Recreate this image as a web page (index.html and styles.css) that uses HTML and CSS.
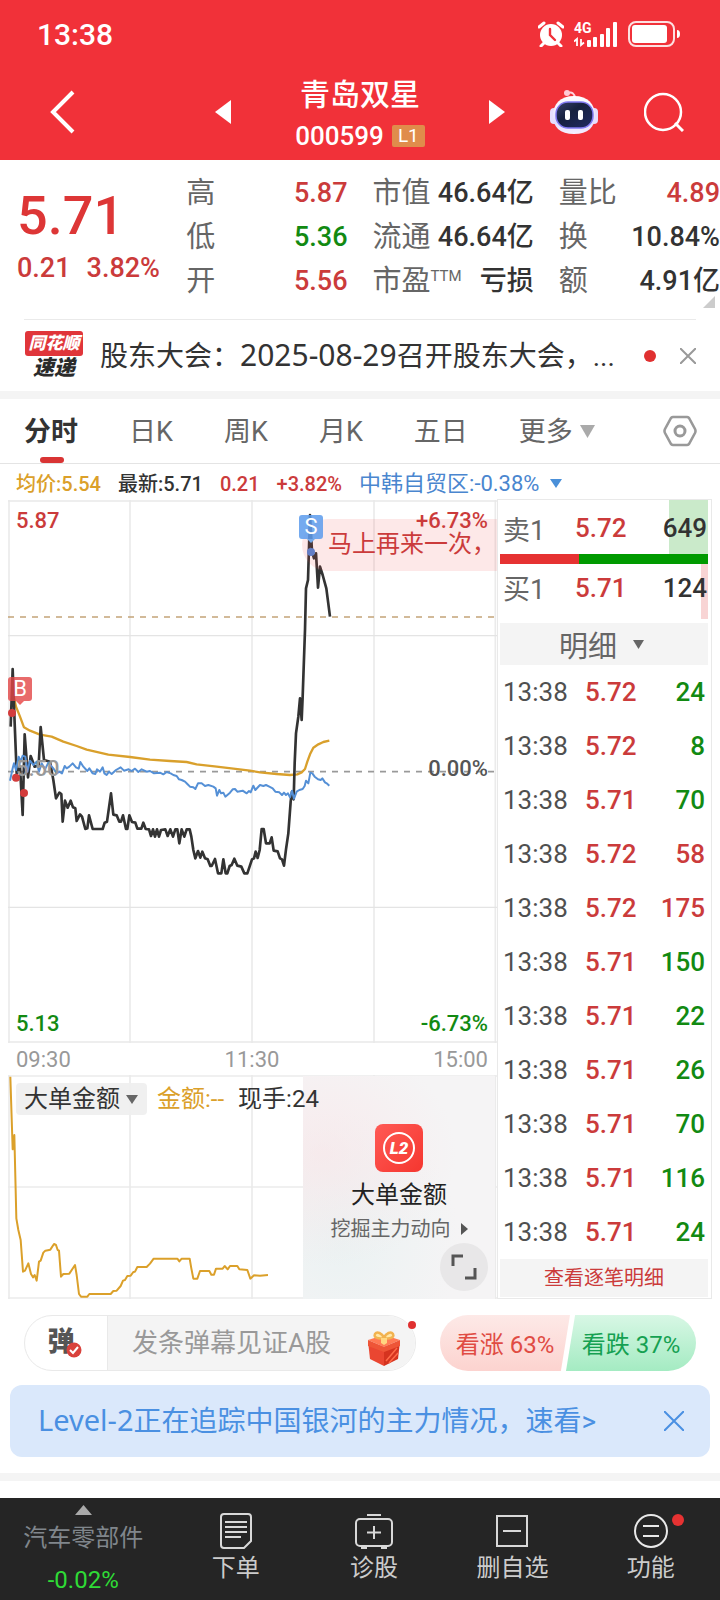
FILE: index.html
```html
<!DOCTYPE html>
<html lang="zh-CN">
<head>
<meta charset="utf-8">
<meta name="viewport" content="width=device-width, initial-scale=1">
<title>青岛双星 000599</title>
<link rel="stylesheet" href="styles.css">
</head>
<body>
<div class="app">
  <header class="top">
    <div class="status">
      <span class="clock">13:38</span>
      <div class="status-icons">
        <svg width="26" height="26" viewBox="0 0 26 26">
          <circle cx="13" cy="14" r="11" fill="#fff"/>
          <path d="M1 6 6 2M25 6 20 2M6 22 3 25M20 22 23 25" stroke="#fff" stroke-width="3" stroke-linecap="round"/>
          <path d="M12 8V14L17 19" fill="none" stroke="#f13139" stroke-width="2.4" stroke-linecap="round"/>
        </svg>
        <div class="signal">
          <span class="net">4G</span>
          <svg width="44" height="25" viewBox="0 0 44 25">
            <g fill="#fff">
              <rect x="13" y="18" width="4" height="7" rx="1"/><rect x="19" y="15" width="4" height="10" rx="1"/>
              <rect x="26" y="12" width="4" height="13" rx="1"/><rect x="32" y="6" width="4" height="19" rx="1"/>
              <rect x="39" y="0" width="4" height="25" rx="1"/>
            </g>
            <path d="M0 19.500 3 17V24M7 17V23L10 20.500" fill="none" stroke="#fff" stroke-width="1.800"/>
          </svg>
        </div>
        <svg width="54" height="26" viewBox="0 0 54 26">
          <rect x="1" y="1" width="45" height="24" rx="7" fill="none" stroke="#fff" stroke-width="2" opacity=".85"/>
          <rect x="4" y="4" width="35" height="18" rx="3" fill="#fff"/>
          <path d="M49 9Q52 9 52 13T49 17Z" fill="#fff"/>
        </svg>
      </div>
    </div>
    <div class="titlebar">
      <button class="icon-btn back" aria-label="返回">
        <svg width="26" height="44" viewBox="0 0 26 44"><path d="M23 2 3 22 23 42" fill="none" stroke="#fff" stroke-width="4"/></svg>
      </button>
      <div class="stock-nav">
        <button class="icon-btn" aria-label="上一只"><svg width="16" height="24" viewBox="0 0 16 24"><path d="M16 0V24L0 12Z" fill="#fff"/></svg></button>
        <div class="stock">
          <h1 class="stock-name">青岛双星</h1>
          <div class="stock-code">000599<span class="level">L1</span></div>
        </div>
        <button class="icon-btn" aria-label="下一只"><svg width="16" height="24" viewBox="0 0 16 24"><path d="M0 0V24L16 12Z" fill="#fff"/></svg></button>
      </div>
      <div class="title-actions">
        <button class="icon-btn" aria-label="智能助手">
          <svg width="48" height="46" viewBox="0 0 48 46">
            <defs>
              <linearGradient id="shell" x1="0" y1="0" x2="0" y2="1"><stop offset="0" stop-color="#fff"/><stop offset=".7" stop-color="#e3dcff"/><stop offset="1" stop-color="#f6f0ff"/></linearGradient>
              <linearGradient id="visor" x1="0" y1="0" x2="1" y2="1"><stop offset="0" stop-color="#36406b"/><stop offset=".4" stop-color="#17213f"/><stop offset="1" stop-color="#202a63"/></linearGradient>
            </defs>
            <path d="M18 4Q24 2 25 9" fill="none" stroke="#ffd3de" stroke-width="2"/>
            <circle cx="17" cy="4" r="3" fill="#ffc9d5"/>
            <rect x="0" y="19" width="9" height="16" rx="4" fill="#e6defd"/><rect x="39" y="19" width="9" height="16" rx="4" fill="#e6defd"/>
            <path d="M24 7C38 7 45 15 45 27 45 38 38 45 24 45S3 38 3 27C3 15 10 7 24 7Z" fill="url(#shell)"/>
            <rect x="6" y="13" width="37" height="26" rx="12" fill="url(#visor)" stroke="#8079f2" stroke-width="1.500"/>
            <rect x="15" y="21" width="5" height="10" rx="2" fill="#fff"/><rect x="28" y="21" width="5" height="10" rx="2" fill="#fff"/>
          </svg>
        </button>
        <button class="icon-btn" aria-label="搜索">
          <svg width="40" height="40" viewBox="0 0 40 40"><circle cx="19" cy="20" r="18" fill="none" stroke="#fff" stroke-width="2.500"/><path d="M31 31 39 39" stroke="#fff" stroke-width="3"/></svg>
        </button>
      </div>
    </div>
  </header>

  <section class="quote">
    <div class="price">
      <div class="price-now">5.71</div>
      <div class="price-change"><span>0.21</span><span>3.82%</span></div>
    </div>
    <dl class="metrics">
      <div class="metric"><dt>高</dt><dd class="up">5.87</dd></div>
      <div class="metric"><dt>低</dt><dd class="down">5.36</dd></div>
      <div class="metric"><dt>开</dt><dd class="up">5.56</dd></div>
    </dl>
    <dl class="metrics">
      <div class="metric"><dt>市值</dt><dd>46.64亿</dd></div>
      <div class="metric"><dt>流通</dt><dd>46.64亿</dd></div>
      <div class="metric"><dt>市盈<sup class="ttm">TTM</sup></dt><dd>亏损</dd></div>
    </dl>
    <dl class="metrics">
      <div class="metric"><dt>量比</dt><dd class="up">4.89</dd></div>
      <div class="metric"><dt>换</dt><dd>10.84%</dd></div>
      <div class="metric"><dt>额</dt><dd>4.91亿</dd></div>
    </dl>
    <svg class="corner" width="12" height="12" viewBox="0 0 12 12"><path d="M12 0V12H0Z" fill="#ccc"/></svg>
  </section>

  <section class="news">
    <div class="news-logo"><span class="logo-top">同花顺</span><span class="logo-bottom">速递</span></div>
    <a class="news-text" href="#">股东大会：<span class="date">2025-08-29</span>召开股东大会，...</a>
    <span class="news-dot"></span>
    <button class="icon-btn" aria-label="关闭"><svg width="16" height="16" viewBox="0 0 16 16"><path d="M0 0 16 16M16 0 0 16" stroke="#999" stroke-width="2"/></svg></button>
  </section>

  <nav class="tabs">
    <button class="tab active">分时</button>
    <button class="tab">日K</button>
    <button class="tab">周K</button>
    <button class="tab">月K</button>
    <button class="tab">五日</button>
    <button class="tab more">更多<svg width="15" height="13" viewBox="0 0 15 13"><path d="M0 0H15L7.500 13Z" fill="#aaa"/></svg></button>
    <button class="icon-btn settings" aria-label="设置">
      <svg width="34" height="32" viewBox="0 0 34 32"><path d="M10 2H24Q25 2 26 3L32 14Q33 16 32 18L26 29Q25 30 24 30H10Q9 30 8 29L2 18Q1 16 2 14L8 3Q9 2 10 2Z" fill="none" stroke="#999" stroke-width="2.600"/><circle cx="17" cy="16" r="5" fill="none" stroke="#999" stroke-width="3"/></svg>
    </button>
  </nav>

  <div class="legend">
    <span class="gold">均价:5.54</span><span>最新:5.71</span><span class="up">0.21</span><span class="up">+3.82%</span>
    <button class="compare">中韩自贸区:-0.38%<svg width="12" height="9" viewBox="0 0 12 9"><path d="M0 0H12L6 9Z" fill="#4a90d9"/></svg></button>
  </div>

  <main class="board">
    <div class="charts">
      <div class="minute">
        <svg class="plot" viewBox="24 30 1467 1629" preserveAspectRatio="none">
          <path d="M27 30V1659M390 30V1659M756 30V1659M1122 30V1659M1486 30V1659" stroke="#ebebeb" stroke-width="5"/>
          <path d="M24 33H1491M24 1656H1491" stroke="#e9e9e9" stroke-width="5"/>
          <path d="M24 437H1491M24 1252H1491" stroke="#e4e4e4" stroke-width="4"/>
          <path d="M24 845H1491" stroke="#999" stroke-width="5" stroke-dasharray="18 18"/>
          <path d="M24 381H1491" stroke="#c4a478" stroke-width="5" stroke-dasharray="18 18"/>
          <polyline fill="none" stroke="#d9a02c" stroke-width="7" stroke-linejoin="round" points="40,615 48,650 60,680 72,712 90,722 120,734 155,740 190,755 230,768 260,779 325,794 390,801 450,809 510,813 560,816 590,823 650,830 700,836 750,842 780,847 830,852 870,855 892,853 905,847 915,837 922,815 930,793 940,773 955,763 970,756 988,752"/>
          <polyline fill="none" stroke="#333" stroke-width="8" stroke-linejoin="round" points="32,710 38,537 44,700 50,850 60,830 68,975 74,733 84,862 92,798 104,830 116,825 122,711 132,810 150,815 160,870 168,925 178,908 184,912 188,995 195,932 203,953 212,932 219,952 226,955 230,993 240,973 246,980 256,1017 262,1015 267,976 278,1017 308,1017 314,998 321,995 333,910 340,974 350,976 358,995 363,995 369,976 378,1017 382,1017 388,976 396,996 406,998 412,1016 424,1016 430,998 437,1017 447,1018 453,1038 459,1018 465,1040 471,1018 477,1040 483,1020 496,1018 503,1038 511,1018 519,1040 526,1018 532,1018 538,1060 545,1018 553,1040 560,1018 569,1018 574,1040 580,1080 586,1105 594,1083 601,1103 607,1085 615,1105 623,1108 631,1128 635,1128 645,1107 654,1150 664,1150 670,1108 677,1150 682,1150 689,1128 695,1125 703,1106 712,1127 724,1130 733,1150 742,1150 756,1108 762,1105 767,1085 773,1104 779,1080 785,1017 791,1017 798,1060 809,1060 815,1042 821,1082 833,1084 840,1105 846,1108 852,1127 858,1078 865,1030 872,935 876,905 881,928 884,820 888,730 895,680 900,625 905,690 908,620 915,420 918,295 924,270 930,75 936,185 942,205 948,190 954,293 960,230 968,255 979,295 990,380"/>
          <polyline fill="none" stroke="#5590d6" stroke-width="6" stroke-linejoin="round" points="30,872 38,835 42,820 48,840 56,800 62,815 68,797 76,800 82,845 90,812 100,825 110,815 117,845 125,820 135,838 145,818 160,835 170,850 178,845 186,850 194,828 200,835 208,830 218,820 228,832 236,836 241,816 250,830 262,843 268,835 278,850 286,852 291,838 300,845 308,832 313,850 320,855 327,845 335,852 348,840 362,832 372,842 386,838 395,843 405,836 415,846 425,838 440,845 450,843 462,850 480,848 490,853 500,846 512,850 520,855 530,858 537,868 545,870 555,875 562,882 570,890 580,892 586,897 594,880 605,880 615,888 625,885 640,890 647,895 651,917 658,900 663,910 670,908 676,920 690,908 698,898 705,897 712,905 728,902 740,910 747,903 752,907 760,887 766,900 780,885 790,888 798,885 808,890 818,895 826,905 838,907 846,915 852,908 858,915 864,910 870,922 876,902 882,926 890,905 898,900 908,897 914,888 918,872 925,880 931,848 937,850 944,860 954,868 962,870 967,865 975,877 980,880 988,887"/>
          <g fill="#d33c3c"><circle cx="36" cy="669" r="12"/><circle cx="48" cy="863" r="12"/><circle cx="72" cy="909" r="12"/></g>
          <circle cx="933" cy="186" r="12" fill="#4f86d8"/>
        </svg>
        <span class="axis high">5.87</span>
        <span class="axis mid">5.50</span>
        <span class="axis low">5.13</span>
        <p class="danmu">马上再来一次，</p>
        <span class="axis high-pct">+6.73%</span>
        <span class="axis mid-pct">0.00%</span>
        <span class="axis low-pct">-6.73%</span>
        <span class="pin buy">B</span>
        <span class="pin sell">S</span>
      </div>
      <div class="times"><span>09:30</span><span>11:30</span><span>15:00</span></div>
      <div class="volume">
        <svg class="plot" viewBox="24 225 1467 672" preserveAspectRatio="none">
          <path d="M27 225V897M390 225V897M756 225V897M1122 225V897M1486 225V897M24 228H1491M24 561H1491M24 894H1491" stroke="#ebebeb" stroke-width="5"/>
          <polyline fill="none" stroke="#dba02a" stroke-width="6" stroke-linejoin="round" points="31,230 38,448 43,405 49,655 55,690 62,720 69,815 75,812 85,790 93,822 99,832 104,825 110,842 117,785 122,782 130,758 136,752 151,749 162,732 168,735 173,750 177,752 183,830 190,822 208,821 225,795 230,825 237,882 243,890 262,890 268,882 332,882 340,873 350,872 362,858 369,842 375,840 382,828 392,827 400,816 405,815 412,801 440,801 450,791 461,776 532,776 538,784 545,776 569,776 574,805 580,836 592,836 600,813 628,813 634,824 642,824 648,806 668,806 674,798 683,808 690,798 712,798 718,808 742,810 751,836 762,826 780,827 804,825"/>
        </svg>
        <a class="promo" href="#">
          <svg class="promo-icon" width="48" height="48" viewBox="0 0 48 48">
            <defs><linearGradient id="badge" x1="0" y1="0" x2="1" y2="1"><stop offset="0" stop-color="#ff5a55"/><stop offset="1" stop-color="#f5362f"/></linearGradient></defs>
            <rect width="48" height="48" rx="8" fill="url(#badge)"/>
            <circle cx="24" cy="24" r="15" fill="none" stroke="#fff" stroke-width="2"/>
            <text class="badge-text" x="24" y="30" text-anchor="middle">L2</text>
          </svg>
          <span class="promo-title">大单金额</span>
          <span class="promo-sub">挖掘主力动向<svg width="7" height="12" viewBox="0 0 7 12"><path d="M0 0 7 6 0 12Z" fill="#555"/></svg></span>
        </a>
        <div class="volume-head">
          <button class="indicator">大单金额<svg width="12" height="9" viewBox="0 0 12 9"><path d="M0 0H12L6 9Z" fill="#666"/></svg></button>
          <span class="gold">金额:--</span><span>现手:24</span>
        </div>
        <button class="expand" aria-label="全屏"><svg width="26" height="26" viewBox="0 0 26 26"><path d="M2 12V2H12M24 14V24H14" fill="none" stroke="#555" stroke-width="3"/></svg></button>
      </div>
    </div>

    <aside class="book">
      <div class="level-row ask"><span class="side">卖1</span><span class="up">5.72</span><span class="qty">649</span></div>
      <div class="ratio"><i style="width:38%"></i></div>
      <div class="level-row bid"><span class="side">买1</span><span class="up">5.71</span><span class="qty">124</span></div>
      <button class="detail-head">明细<svg width="11" height="9" viewBox="0 0 11 9"><path d="M0 0H11L5.500 9Z" fill="#666"/></svg></button>
      <table class="ticks">
        <tbody>
          <tr><td>13:38</td><td class="up">5.72</td><td class="down">24</td></tr>
          <tr><td>13:38</td><td class="up">5.72</td><td class="down">8</td></tr>
          <tr><td>13:38</td><td class="up">5.71</td><td class="down">70</td></tr>
          <tr><td>13:38</td><td class="up">5.72</td><td class="up">58</td></tr>
          <tr><td>13:38</td><td class="up">5.72</td><td class="up">175</td></tr>
          <tr><td>13:38</td><td class="up">5.71</td><td class="down">150</td></tr>
          <tr><td>13:38</td><td class="up">5.71</td><td class="down">22</td></tr>
          <tr><td>13:38</td><td class="up">5.71</td><td class="down">26</td></tr>
          <tr><td>13:38</td><td class="up">5.71</td><td class="down">70</td></tr>
          <tr><td>13:38</td><td class="up">5.71</td><td class="down">116</td></tr>
          <tr><td>13:38</td><td class="up">5.71</td><td class="down">24</td></tr>
        </tbody>
      </table>
      <a class="all-ticks" href="#">查看逐笔明细</a>
    </aside>
  </main>

  <section class="social">
    <div class="comment">
      <button class="danmu-toggle" aria-label="弹幕开关">弹<svg class="check" width="16" height="16" viewBox="0 0 16 16"><circle cx="8" cy="8" r="7.500" fill="#d9423c"/><path d="M4 8 7 11 12 5" fill="none" stroke="#fff" stroke-width="2"/></svg></button>
      <input class="comment-input" type="text" aria-label="弹幕" placeholder="发条弹幕见证A股">
      <svg class="gift" width="34" height="36" viewBox="0 0 34 36">
        <path d="M1 11 17 17V36L3 29Z" fill="#ea4631"/><path d="M33 11 17 17V36L31 29Z" fill="#d5331f"/>
        <path d="M1 10 17 5 33 10 17 17Z" fill="#ff7a55"/><path d="M1 10 17 17V22L1 16ZM33 10 17 17V22L33 16Z" fill="#ee5537"/>
        <path d="M19 31 30 18M22 33 31 23" stroke="#ff6a48" stroke-width="1.500"/>
        <path d="M17 8C12 9 6 8 8 4 10 1 15 3 17 8 19 3 24 1 26 4 28 8 22 9 17 8Z" fill="#ffe8a8" stroke="#f2b34f" stroke-width="2.500"/>
        <path d="M14 8H20V13L17 15 14 13Z" fill="#ffd681"/>
      </svg>
      <span class="gift-dot"></span>
    </div>
    <div class="vote">
      <button class="vote-up">看涨 63%</button>
      <button class="vote-down">看跌 37%</button>
    </div>
  </section>

  <section class="notice">
    <a class="notice-text" href="#"><span class="latin">Level-2</span>正在追踪中国银河的主力情况，速看&gt;</a>
    <button class="icon-btn" aria-label="关闭提示"><svg width="20" height="20" viewBox="0 0 20 20"><path d="M0 0 20 20M20 0 0 20" stroke="#4a90e2" stroke-width="2"/></svg></button>
  </section>
  <div class="band"></div>

  <footer class="bottom">
    <button class="sector">
      <svg width="17" height="10" viewBox="0 0 17 10"><path d="M8.500 0 17 10H0Z" fill="#aaa"/></svg>
      <span class="sector-name">汽车零部件</span><span class="sector-pct">-0.02%</span>
    </button>
    <button class="action">
      <svg width="34" height="38" viewBox="0 0 34 38" fill="none" stroke="#d8d8d8" stroke-width="2"><path d="M5 2H29Q32 2 32 5V29L25 36H5Q2 36 2 33V5Q2 2 5 2ZM6 10H28M6 15H28M6 20H28M6 25H22"/></svg>
      <span>下单</span>
    </button>
    <button class="action">
      <svg width="38" height="38" viewBox="0 0 38 38" fill="none" stroke="#d8d8d8" stroke-width="2"><rect x="1" y="7" width="36" height="27" rx="4"/><path d="M12 3H26M19 14V27M12 20.500H26M6 36H12M26 36H32"/></svg>
      <span>诊股</span>
    </button>
    <button class="action">
      <svg width="38" height="38" viewBox="0 0 38 38" fill="none" stroke="#d8d8d8" stroke-width="2"><path d="M4 4H34V34H4ZM10 19H28"/></svg>
      <span>删自选</span>
    </button>
    <button class="action">
      <svg width="38" height="38" viewBox="0 0 38 38" fill="none" stroke="#e8e8e8" stroke-width="2"><circle cx="19" cy="19" r="16"/><path d="M11 14H27M11 24H27"/></svg>
      <span>功能</span><i class="action-dot"></i>
    </button>
  </footer>
</div>
</body>
</html>
```
FILE: styles.css
```css
* { box-sizing: border-box; margin: 0; padding: 0; }

body {
  background: #fff;
  color: #333;
  font-family: Roboto, "Noto Sans CJK SC", sans-serif;
}

button, input { border: 0; background: none; font: inherit; color: inherit; }
a { color: inherit; text-decoration: none; }
svg { display: block; flex: none; }

.app { display: flex; flex-direction: column; min-height: 100vh; }
.up { color: #cb3b3b; }
.down { color: #128a12; }
.gold { color: #dba02a; }
.latin { font-family: "Noto Sans", sans-serif; font-size: 29px; }
.date { font-family: "Noto Sans", sans-serif; font-size: 30px; }
.icon-btn { display: flex; flex: none; }

/* header */
.top { background: #f13139; color: #fff; }
.status { display: flex; justify-content: space-between; height: 68px; padding: 2px 38px 0 37px; align-items: center; }
.clock { font-size: 30px; line-height: 36px; font-weight: 500; }
.status-icons { display: flex; align-items: center; gap: 10px; padding-bottom: 2px; }
.signal { position: relative; }
.net { position: absolute; left: 0; top: -1px; font-size: 14px; line-height: 14px; font-weight: 700; }
.titlebar { display: grid; grid-template-columns: 200fr 320fr 200fr; align-items: center; height: 92px; padding-bottom: 4px; }
.back { padding-left: 50px; }
.stock-nav { display: flex; justify-content: space-between; align-items: center; padding: 0 15px; }
.stock { padding-top: 5px; text-align: center; }
.stock-name { font-size: 30px; line-height: 42px; font-weight: 500; }
.stock-code { display: flex; align-items: center; gap: 8px; font-size: 26px; line-height: 40px; font-weight: 500; }
.level { padding: 0 6px; border-radius: 2px; background: #e08c4b; font-size: 19px; line-height: 22px; font-weight: 400; }
.title-actions { display: flex; justify-content: flex-end; align-items: center; gap: 46px; padding-right: 36px; }

/* quote */
.quote { position: relative; display: grid; grid-template-columns: 144fr 161fr 161fr 161fr; column-gap: 25px; padding: 11px 0 17px 17px; }
.quote::after { content: ""; position: absolute; left: 24px; right: 24px; bottom: 0; height: 1px; background: #eaeaea; }
.price { padding-top: 12px; white-space: nowrap; }
.price-now { color: #dd3636; font-size: 54px; line-height: 66px; font-weight: 500; }
.price-change { display: flex; gap: 16px; color: #cb3b3b; font-size: 27px; line-height: 38px; font-weight: 500; }
.metric { display: flex; justify-content: space-between; align-items: center; height: 44px; white-space: nowrap; }
.metric dt { color: #666; font-size: 29px; line-height: 44px; }
.metric dd { font-size: 27px; line-height: 44px; font-weight: 500; }
.ttm { font-size: 15px; line-height: 15px; vertical-align: 10px; }
.corner { position: absolute; right: 5px; bottom: 12px; }

/* news */
.news { display: flex; align-items: center; height: 71px; padding: 0 24px; }
.news-logo { display: flex; flex-direction: column; align-items: center; width: 60px; margin-right: 16px; font-style: italic; font-weight: 900; }
.logo-top { width: 58px; border-radius: 3px; background: #e0353a; color: #fff; font-size: 17px; line-height: 25px; text-align: center; }
.logo-bottom { font-size: 21px; line-height: 25px; color: #2b2b2b; }
.news-text { flex: 1; overflow: hidden; white-space: nowrap; font-size: 28px; line-height: 40px; }
.news-dot { width: 12px; height: 12px; margin: 0 24px; border-radius: 50%; background: #e03030; }

/* period tabs */
.tabs { display: flex; align-items: center; gap: 51px; height: 73px; padding: 0 23px 0 24px; border-top: 8px solid #f4f4f4; border-bottom: 1px solid #e4e4e4; }
.tab { position: relative; height: 64px; padding-top: 1px; color: #666; font-size: 27px; line-height: 64px; white-space: nowrap; }
.tab.active { color: #333; font-weight: 700; }
.tab.active::after { content: ""; position: absolute; left: 16px; bottom: 0; width: 24px; height: 6px; border-radius: 3px; background: #d93434; }
.more { display: flex; align-items: center; gap: 7px; }
.settings { margin-left: auto; }

.legend { display: flex; align-items: center; gap: 17px; height: 35px; padding: 4px 16px 0; font-size: 20px; line-height: 30px; font-weight: 500; white-space: nowrap; }
.compare { display: flex; align-items: center; gap: 11px; color: #4a86cf; font-size: 22px; font-weight: 400; }

/* chart and order book */
.board { display: grid; grid-template-columns: 1fr 215px; padding: 0 8px; }
.charts { display: flex; flex-direction: column; padding-top: 1px; }
.minute { position: relative; height: 543px; }
.plot { width: 100%; height: 100%; }
.axis { position: absolute; font-size: 22px; line-height: 24px; font-weight: 500; }
.high { left: 8px; top: 9px; color: #cb3b3b; }
.high-pct { right: 9px; top: 9px; color: #cb3b3b; }
.mid { left: 8px; top: 257px; color: #999; }
.mid-pct { right: 9px; top: 257px; color: #555; }
.low { left: 8px; bottom: 7px; color: #128a12; }
.low-pct { right: 9px; bottom: 7px; color: #128a12; }
.danmu { position: absolute; right: 0; top: 19px; width: 195px; height: 52px; padding-left: 26px; overflow: hidden; border-radius: 26px 0 0 26px; background: rgba(240, 80, 80, .13); color: #cb3b3b; font-size: 24px; line-height: 50px; white-space: nowrap; }
.pin { position: absolute; width: 24px; height: 24px; border-radius: 3px; color: #fff; font-size: 22px; line-height: 24px; text-align: center; }
.pin::after { content: ""; position: absolute; left: 8px; top: 24px; border: 4px solid transparent; border-top-color: inherit; border-bottom: 0; }
.buy { left: 0; top: 177px; background: rgba(226, 70, 70, .8); border-color: #e66; }
.sell { left: 291px; top: 15px; background: rgba(92, 155, 236, .85); border-color: #74a9ea; }
.times { display: flex; justify-content: space-between; height: 32px; padding: 0 9px 0 8px; color: #999; font-size: 22px; line-height: 34px; }
.volume { position: relative; height: 224px; }
.volume-head { position: absolute; left: 8px; top: 8px; display: flex; align-items: center; gap: 10px; font-size: 24px; line-height: 32px; font-weight: 400; white-space: nowrap; }
.volume-head .gold { margin-right: 4px; }
.indicator { display: flex; align-items: center; gap: 6px; height: 32px; padding: 0 9px 0 8px; border-radius: 4px; background: rgba(238, 238, 238, .9); }
.promo { position: absolute; right: 2px; top: 1px; bottom: 0; display: flex; flex-direction: column; align-items: center; width: 192px; padding-top: 48px; background: radial-gradient(ellipse at 10% 35%, rgba(250, 225, 228, .5), transparent 55%), radial-gradient(ellipse at 20% 75%, rgba(225, 240, 240, .5), transparent 55%), #f5f4f5; }
.badge-text { fill: #fff; font-size: 17px; font-weight: 900; font-style: italic; }
.promo-title { margin-top: 6px; color: #222; font-size: 24px; line-height: 34px; }
.promo-sub { display: flex; align-items: center; gap: 10px; color: #666; font-size: 20px; line-height: 34px; white-space: nowrap; }
.expand { position: absolute; right: 9px; bottom: 8px; display: flex; align-items: center; justify-content: center; width: 48px; height: 48px; border-radius: 50%; background: #e8e7e8; }

.book { display: flex; flex-direction: column; padding: 0 3px 1px 2px; border: 1px solid #e9e9e9; font-size: 26px; font-weight: 500; }
.level-row { display: grid; grid-template-columns: 72px 1fr auto; align-items: center; padding: 0 1px 0 3px; }
.side { color: #666; font-size: 27px; font-weight: 400; }
.ask { height: 54px; padding-top: 2px; background: linear-gradient(#caeaca, #caeaca) right / 39px 100% no-repeat; }
.bid { height: 59px; padding-bottom: 12px; background: linear-gradient(#f8d4d4, #f8d4d4) right top / 7px 55px no-repeat; }
.ratio { height: 10px; background: #009a00; }
.ratio i { display: block; height: 100%; background: #e63232; }
.detail-head { display: flex; align-items: center; justify-content: center; gap: 16px; height: 42px; padding-right: 5px; background: #f4f4f4; color: #666; font-size: 29px; font-weight: 400; }
.ticks { width: 100%; border-collapse: collapse; }
.ticks tr { height: 54px; }
.ticks td { line-height: 32px; vertical-align: middle; }
.ticks td:first-child { width: 85px; padding-left: 3px; color: #505050; font-weight: 400; }
.ticks td:last-child { padding-right: 3px; text-align: right; }
.all-ticks { height: 38px; background: #f4f4f4; color: #cb3b3b; font-size: 20px; line-height: 38px; font-weight: 400; text-align: center; }

/* comment and vote */
.social { display: flex; gap: 24px; padding: 16px 24px 14px; }
.comment { position: relative; display: flex; flex: 1; min-width: 0; height: 56px; border: 1px solid #e9e9e9; border-radius: 28px; }
.danmu-toggle { position: relative; flex: none; width: 82px; color: #555; font-size: 27px; font-weight: 900; padding: 0 10px 8px 0; }
.check { position: absolute; right: 25px; bottom: 12px; }
.comment-input { flex: 1; min-width: 0; padding-left: 24px; border-left: 1px solid #e9e9e9; border-radius: 0 28px 28px 0; background: #f4f4f4; font-size: 26px; }
.comment-input::placeholder { color: #999; }
.gift { position: absolute; right: 14px; bottom: 4px; }
.gift-dot { position: absolute; right: -1px; top: 5px; width: 8px; height: 8px; border-radius: 50%; background: #e03030; }
.vote { display: flex; flex: none; width: 256px; height: 56px; font-size: 24px; white-space: nowrap; }
.vote-up, .vote-down { flex: 1; padding-bottom: 2px; }
.vote-up { border-radius: 28px 0 0 28px; background: linear-gradient(#fde9e7, #fcd3cf); color: #e04b43; clip-path: polygon(0 0, 100% 0, 93% 100%, 0 100%); }
.vote-down { margin-left: -4px; border-radius: 0 28px 28px 0; background: linear-gradient(#d8f7e5, #a4ebc2); color: #15a152; clip-path: polygon(7% 0, 100% 0, 100% 100%, 0 100%); }

.notice { display: flex; align-items: center; justify-content: space-between; height: 72px; margin: 0 10px; padding: 0 26px 0 28px; border-radius: 12px; background: #dae8fb; color: #4a90e2; }
.notice-text { font-size: 28px; line-height: 40px; white-space: nowrap; }
.band { height: 8px; margin: 16px 0 17px; background: #f4f4f4; }

/* bottom bar */
.bottom { display: grid; grid-template-columns: 166fr 138fr 138fr 138fr 138fr; flex: 1; background: #252525; color: #ccc; font-size: 24px; line-height: 36px; white-space: nowrap; }
.sector { display: flex; flex-direction: column; align-items: center; padding-top: 7px; }
.sector-name { margin-top: 5px; color: #80868c; }
.sector-pct { margin-top: 6px; color: #2fdb36; }
.action { position: relative; display: flex; flex-direction: column; align-items: center; padding-top: 14px; }
.action-dot { position: absolute; left: 50%; top: 16px; width: 12px; height: 12px; margin-left: 21px; border-radius: 50%; background: #e63232; }
```
